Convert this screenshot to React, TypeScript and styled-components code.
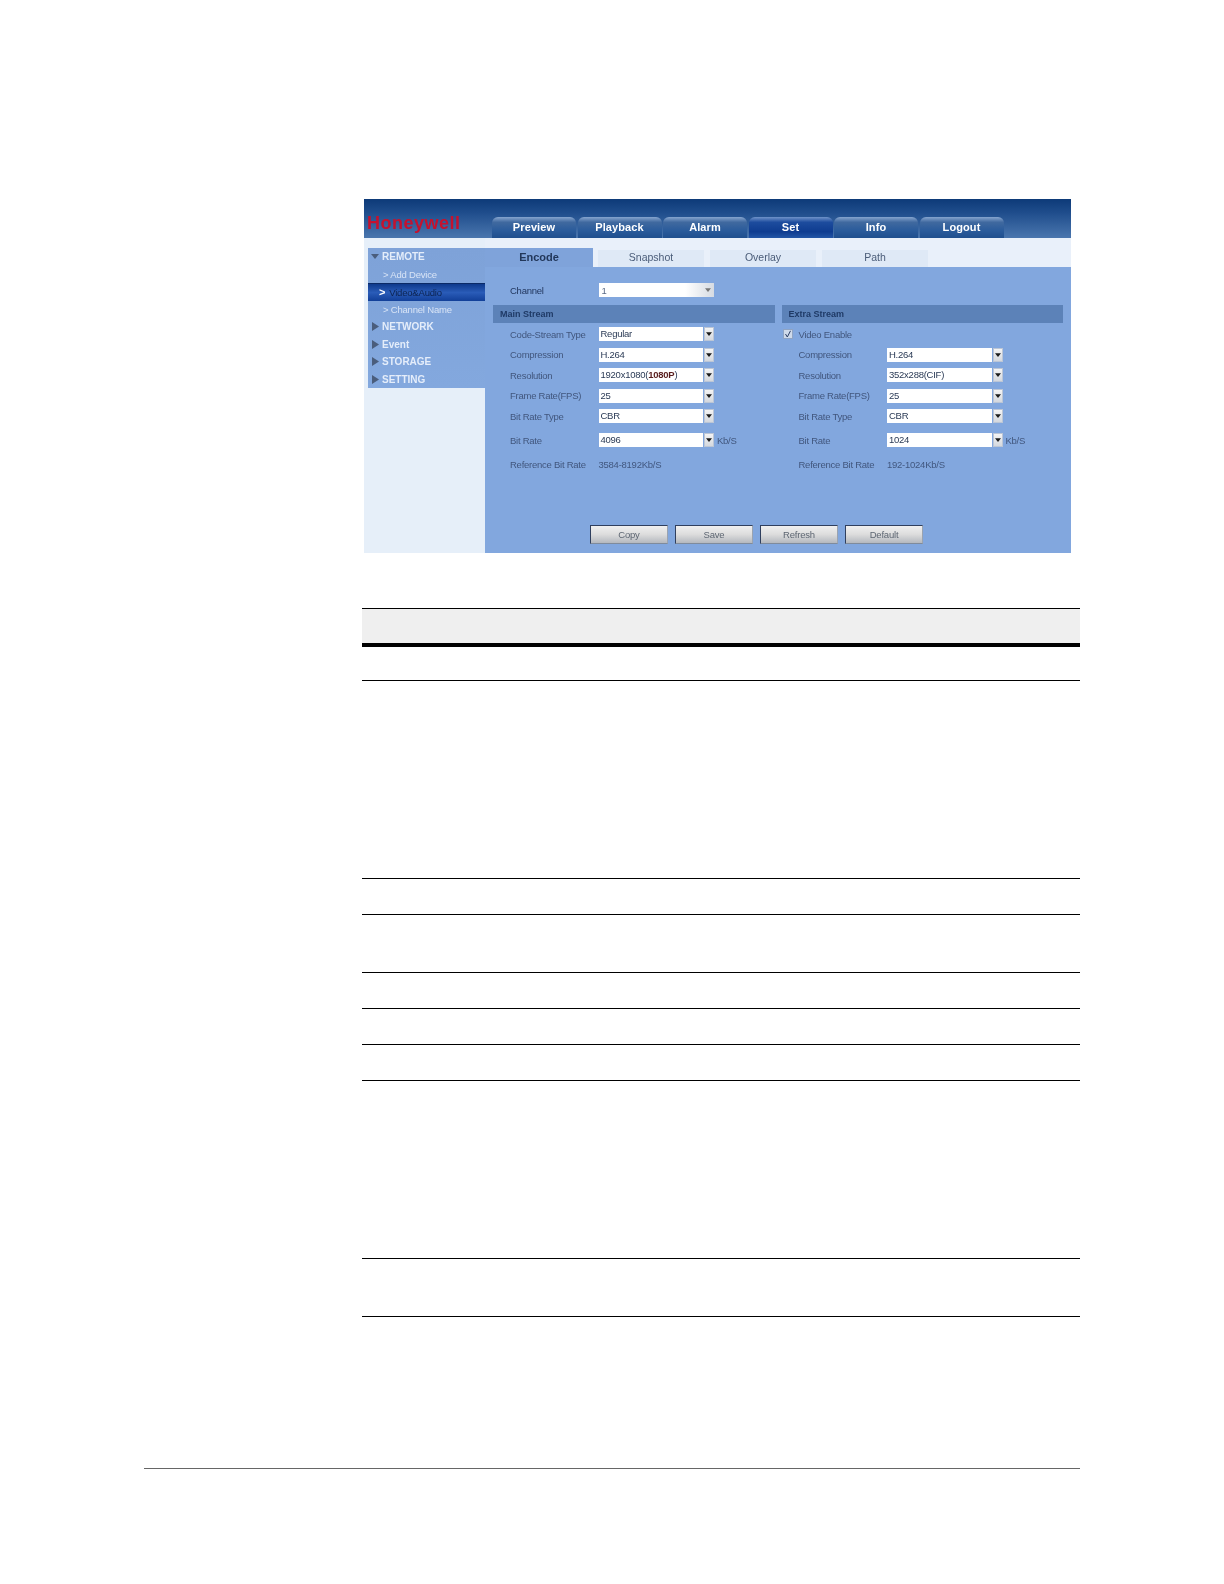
import React from "react";
import styled, { createGlobalStyle } from "styled-components";

const GlobalStyle = createGlobalStyle`
  html, body {
    margin: 0;
    padding: 0;
    background: #ffffff;
  }
  body {
    font-family: "Liberation Sans", Arial, sans-serif;
  }
`;

const Page = styled.div`
  width: 1224px;
  height: 1584px;
  padding-top: 199px;
  box-sizing: border-box;
  overflow: hidden;
`;

const Shot = styled.div`
  margin-left: 364px;
  width: 707px;
  height: 354px;
  display: flex;
  flex-direction: column;
  font-size: 9.5px;
  filter: blur(0.4px);
`;

const Header = styled.div`
  height: 39px;
  flex: none;
  display: flex;
  align-items: flex-end;
  background: linear-gradient(180deg, #0d3a78 0%, #1f4d8c 35%, #4a76ae 100%);
`;

const Logo = styled.div`
  width: 128px;
  flex: none;
  padding: 0 0 5px 3px;
  box-sizing: border-box;
  color: #c4122f;
  font-size: 18px;
  font-weight: 700;
  letter-spacing: 0.5px;
  line-height: 20px;
`;

const NavTabs = styled.div`
  display: flex;
  gap: 1.5px;
`;

const NavTab = styled.div<{ $active?: boolean }>`
  width: 84px;
  height: 21px;
  border-radius: 6px 6px 0 0;
  background: ${(p) =>
    p.$active
      ? "linear-gradient(180deg, #6f93c9 0%, #1d4c9e 25%, #0f3c90 70%, #2356a6 100%)"
      : "linear-gradient(180deg, #86a5cf 0%, #40699f 25%, #2a5b9b 65%, #1f4f8e 100%)"};
  color: #ffffff;
  font-size: 11px;
  font-weight: 700;
  letter-spacing: 0.1px;
  line-height: 21px;
  text-align: center;
`;

const Body = styled.div`
  flex: 1;
  display: flex;
  min-height: 0;
`;

const Sidebar = styled.div`
  width: 121px;
  flex: none;
  padding: 10px 0 0 4px;
  box-sizing: border-box;
  background: #e6eff9;
`;

const Menu = styled.div`
  background: linear-gradient(180deg, #7ea2d8 0%, #83a8de 100%);
`;

const MenuHead = styled.div`
  height: 17.5px;
  display: flex;
  align-items: center;
  gap: 3px;
  padding-left: 3px;
  color: #e4edfa;
  font-size: 10px;
  font-weight: 700;
`;

const HeadArrow = styled.span`
  width: 8px;
  display: flex;
  justify-content: center;
  flex: none;
  svg {
    display: block;
    fill: #4a5d7c;
  }
`;

const MenuItem = styled.div<{ $active?: boolean }>`
  height: 17.5px;
  display: flex;
  align-items: center;
  gap: ${(p) => (p.$active ? "4px" : "3px")};
  padding-left: ${(p) => (p.$active ? "11px" : "15px")};
  box-sizing: border-box;
  font-size: 9.5px;
  letter-spacing: -0.2px;
  color: ${(p) => (p.$active ? "#0c2350" : "#d8e4f6")};
  background: ${(p) =>
    p.$active ? "linear-gradient(180deg, #0f3a8c 0%, #2a5cb8 50%, #123f98 100%)" : "none"};
  border-top: ${(p) => (p.$active ? "1px solid #0b2a66" : "none")};
`;

const ActiveChevron = styled.span`
  color: #ffffff;
  font-weight: 700;
  font-size: 11px;
`;

const Main = styled.div`
  flex: 1;
  display: flex;
  flex-direction: column;
  min-width: 0;
`;

const TabBar = styled.div`
  height: 29px;
  flex: none;
  display: flex;
  align-items: flex-end;
  gap: 6px;
  background: #e9f0fa;
`;

const ContentTab = styled.div<{ $active?: boolean }>`
  width: ${(p) => (p.$active ? "108px" : "106px")};
  margin-right: ${(p) => (p.$active ? "-1px" : "0")};
  height: ${(p) => (p.$active ? "19px" : "17px")};
  line-height: ${(p) => (p.$active ? "19px" : "15px")};
  text-align: center;
  font-size: ${(p) => (p.$active ? "11px" : "10.5px")};
  font-weight: ${(p) => (p.$active ? 700 : 400)};
  color: ${(p) => (p.$active ? "#22375a" : "#4a5c78")};
  background: ${(p) => (p.$active ? "#7fa3da" : "#dfe9f6")};
`;

const Content = styled.div`
  flex: 1;
  display: flex;
  flex-direction: column;
  padding: 16px 8px 9px;
  background: #82a7de;
  min-height: 0;
`;

const ChannelRow = styled.div`
  height: 14px;
  display: flex;
  align-items: center;
  padding-left: 17px;
`;

const Streams = styled.div`
  display: flex;
  gap: 7px;
  margin-top: 8px;
`;

const Stream = styled.div`
  flex: 1;
`;

const SectionHead = styled.div`
  height: 18px;
  padding-left: 7px;
  background: #5c82b8;
  color: #1f3a66;
  font-size: 9px;
  font-weight: 700;
  line-height: 18px;
`;

const Fields = styled.div`
  display: flex;
  flex-direction: column;
  gap: 6.5px;
  padding: 4px 0 0 17px;
`;

const Row = styled.div<{ $spaced?: boolean }>`
  height: 14px;
  display: flex;
  align-items: center;
  margin-top: ${(p) => (p.$spaced ? "3.5px" : "0")};
`;

const Label = styled.div<{ $dark?: boolean }>`
  width: 88.5px;
  flex: none;
  color: ${(p) => (p.$dark ? "#22375f" : "#41567d")};
  font-size: 9.5px;
  letter-spacing: -0.25px;
  white-space: nowrap;
`;

const Select = styled.div`
  width: 115.5px;
  height: 14px;
  flex: none;
  display: flex;
  gap: 1px;
`;

const SelectValue = styled.div`
  flex: 1;
  padding-left: 2px;
  background: #ffffff;
  color: #2a3a55;
  font-size: 9.5px;
  letter-spacing: -0.25px;
  line-height: 14px;
  b {
    color: #5a1f1f;
  }
`;

const SelectArrow = styled.div`
  width: 10px;
  flex: none;
  display: flex;
  align-items: center;
  justify-content: center;
  background: linear-gradient(180deg, #f4f4f4 0%, #d4d8de 100%);
  border: 1px solid #bcc6d6;
  box-sizing: border-box;
  svg {
    display: block;
    fill: #1c1c1c;
  }
`;

const ChannelSelect = styled.div`
  width: 115.5px;
  height: 14px;
  flex: none;
  display: flex;
  align-items: center;
  justify-content: space-between;
  padding: 0 3px;
  box-sizing: border-box;
  background: linear-gradient(90deg, #ffffff 0%, #ffffff 75%, #d6dbe2 100%);
  color: #5a6a85;
  font-size: 9.5px;
  svg {
    display: block;
    fill: #777777;
  }
`;

const Unit = styled.div`
  margin-left: 3px;
  color: #41567d;
  font-size: 9.5px;
  letter-spacing: -0.25px;
`;

const RefValue = styled.div`
  color: #41577f;
  font-size: 9.5px;
  letter-spacing: -0.25px;
`;

const CheckLabel = styled.div`
  display: flex;
  align-items: center;
  margin-left: -17px;
  color: #41567d;
  font-size: 9.5px;
  letter-spacing: -0.25px;
  gap: 6px;
`;

const CheckBox = styled.div`
  width: 10px;
  height: 10px;
  margin-left: 1px;
  flex: none;
  background: #cfdaea;
  border: 1px solid #8fa4c4;
  box-sizing: border-box;
  display: flex;
  align-items: center;
  justify-content: center;
  svg {
    display: block;
  }
`;

const ButtonBar = styled.div`
  margin-top: auto;
  display: flex;
  gap: 7px;
  padding-left: 97px;
`;

const Button = styled.div`
  width: 78px;
  height: 19px;
  box-sizing: border-box;
  border-top: 1px solid #2f3f5e;
  border-left: 1px solid #2f3f5e;
  border-right: 1px solid #9aa3b0;
  border-bottom: 1px solid #7f8b9c;
  background: linear-gradient(180deg, #f0f0f0 0%, #dcdcdc 50%, #b4b8be 100%);
  color: #5d6672;
  font-size: 9.5px;
  letter-spacing: -0.2px;
  line-height: 17px;
  text-align: center;
`;

const DocTable = styled.div`
  margin: 55px 0 0 362px;
  width: 718px;
  border-top: 1px solid #000000;
`;

const TableHead = styled.div`
  height: 34px;
  background: #efefef;
  border-bottom: 4px solid #000000;
`;

const TableRow = styled.div<{ $h: number }>`
  height: ${(p) => p.$h}px;
  box-sizing: border-box;
  border-bottom: 1px solid #000000;
`;

const FooterRule = styled.div`
  margin: 151px 0 0 144px;
  width: 936px;
  height: 1px;
  background: #666666;
`;

const DownTri = ({ w = 7, h = 4 }: { w?: number; h?: number }) => (
  <svg width={w} height={h} viewBox="0 0 8 5">
    <path d="M0 0h8L4 5z" />
  </svg>
);

const RightTri = () => (
  <svg width="7" height="9" viewBox="0 0 7 9">
    <path d="M0 0l7 4.5L0 9z" />
  </svg>
);

const navItems = ["Preview", "Playback", "Alarm", "Set", "Info", "Logout"];
const tabs = ["Encode", "Snapshot", "Overlay", "Path"];
const rowHeights = [34, 198, 36, 58, 36, 36, 36, 178, 58];

type FieldProps = {
  label: string;
  value: React.ReactNode;
  unit?: string;
  spaced?: boolean;
};

const Field = ({ label, value, unit, spaced }: FieldProps) => (
  <Row $spaced={spaced}>
    <Label>{label}</Label>
    <Select>
      <SelectValue>{value}</SelectValue>
      <SelectArrow>
        <DownTri w={6} h={4} />
      </SelectArrow>
    </Select>
    {unit && <Unit>{unit}</Unit>}
  </Row>
);

const App = () => {
  return (
    <Page>
      <GlobalStyle />
      <Shot>
        <Header>
          <Logo>Honeywell</Logo>
          <NavTabs>
            {navItems.map((n) => (
              <NavTab key={n} $active={n === "Set"}>
                {n}
              </NavTab>
            ))}
          </NavTabs>
        </Header>
        <Body>
          <Sidebar>
            <Menu>
              <MenuHead>
                <HeadArrow>
                  <DownTri w={8} h={7} />
                </HeadArrow>
                REMOTE
              </MenuHead>
              <MenuItem>&gt; Add Device</MenuItem>
              <MenuItem $active>
                <ActiveChevron>&gt;</ActiveChevron> Video&amp;Audio
              </MenuItem>
              <MenuItem>&gt; Channel Name</MenuItem>
              {["NETWORK", "Event", "STORAGE", "SETTING"].map((m) => (
                <MenuHead key={m}>
                  <HeadArrow>
                    <RightTri />
                  </HeadArrow>
                  {m}
                </MenuHead>
              ))}
            </Menu>
          </Sidebar>
          <Main>
            <TabBar>
              {tabs.map((t) => (
                <ContentTab key={t} $active={t === "Encode"}>
                  {t}
                </ContentTab>
              ))}
            </TabBar>
            <Content>
              <ChannelRow>
                <Label $dark>Channel</Label>
                <ChannelSelect>
                  1
                  <DownTri w={6} h={4} />
                </ChannelSelect>
              </ChannelRow>
              <Streams>
                <Stream>
                  <SectionHead>Main Stream</SectionHead>
                  <Fields>
                    <Field label="Code-Stream Type" value="Regular" />
                    <Field label="Compression" value="H.264" />
                    <Field
                      label="Resolution"
                      value={
                        <>
                          1920x1080(<b>1080P</b>)
                        </>
                      }
                    />
                    <Field label="Frame Rate(FPS)" value="25" />
                    <Field label="Bit Rate Type" value="CBR" />
                    <Field label="Bit Rate" value="4096" unit="Kb/S" spaced />
                    <Row $spaced>
                      <Label>Reference Bit Rate</Label>
                      <RefValue>3584-8192Kb/S</RefValue>
                    </Row>
                  </Fields>
                </Stream>
                <Stream>
                  <SectionHead>Extra Stream</SectionHead>
                  <Fields>
                    <Row>
                      <CheckLabel>
                        <CheckBox>
                          <svg width="8" height="8" viewBox="0 0 8 8">
                            <path d="M1.5 4l1.8 3L6.5 .8" fill="none" stroke="#2c3f66" strokeWidth="1" />
                          </svg>
                        </CheckBox>
                        Video Enable
                      </CheckLabel>
                    </Row>
                    <Field label="Compression" value="H.264" />
                    <Field label="Resolution" value="352x288(CIF)" />
                    <Field label="Frame Rate(FPS)" value="25" />
                    <Field label="Bit Rate Type" value="CBR" />
                    <Field label="Bit Rate" value="1024" unit="Kb/S" spaced />
                    <Row $spaced>
                      <Label>Reference Bit Rate</Label>
                      <RefValue>192-1024Kb/S</RefValue>
                    </Row>
                  </Fields>
                </Stream>
              </Streams>
              <ButtonBar>
                {["Copy", "Save", "Refresh", "Default"].map((b) => (
                  <Button key={b}>{b}</Button>
                ))}
              </ButtonBar>
            </Content>
          </Main>
        </Body>
      </Shot>
      <DocTable>
        <TableHead />
        {rowHeights.map((h, i) => (
          <TableRow key={i} $h={h} />
        ))}
      </DocTable>
      <FooterRule />
    </Page>
  );
};

export default App;
